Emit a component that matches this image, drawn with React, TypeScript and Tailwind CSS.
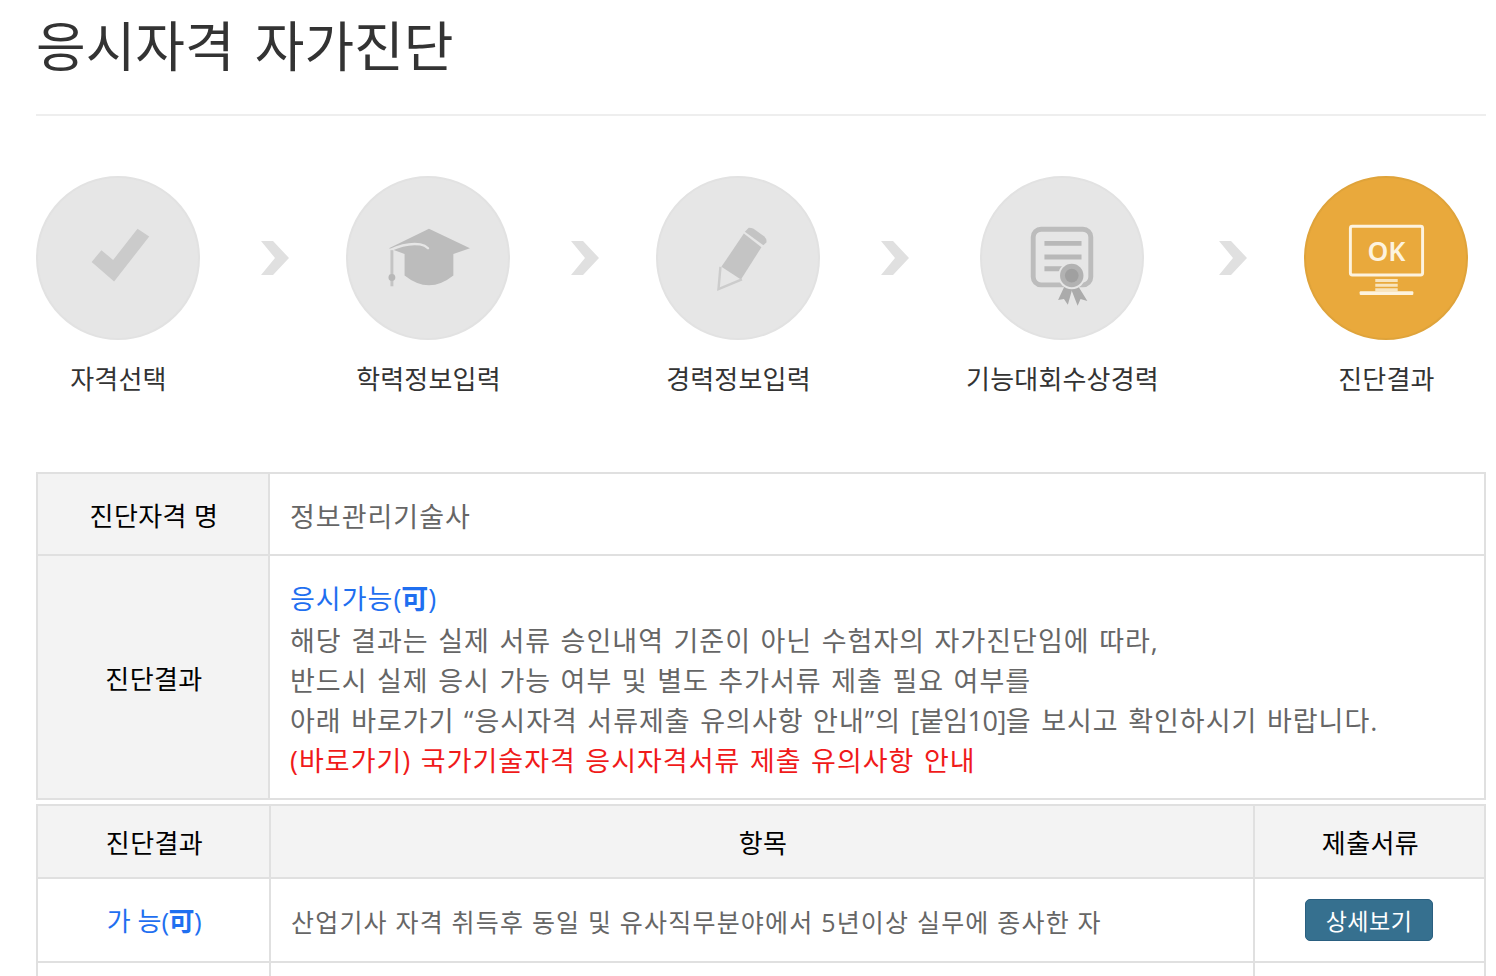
const font = "font-['Open_Sans','Noto_Sans_CJK_KR','Noto_Sans',sans-serif]";

function CheckIcon() {
  return (
    <svg viewBox="0 0 164 164" className="h-full w-full">
      <polygon points="102,52 114,60 78,106 55,86 65,74 77,84" fill="#cbcbcb" />
    </svg>
  );
}

function CapIcon() {
  return (
    <svg viewBox="0 0 164 164" className="h-full w-full">
      <path d="M83 52 L125 72 L108 78 V100 Q83 120 58 100 V78 L42 72 Z" fill="#bcbcbc" />
      <path d="M43 74 Q60 66 74 68 Q79 69 82 72" fill="none" stroke="#e6e6e6" strokeWidth="2.5" strokeLinecap="round" />
      <path d="M45 74 V111" stroke="#c4c4c4" strokeWidth="3" />
      <circle cx="45" cy="102" r="3.5" fill="#b8b8b8" />
    </svg>
  );
}

function PencilIcon() {
  return (
    <svg viewBox="0 0 164 164" className="h-full w-full">
      <polygon points="65,91 88,57 106,71 85,104" fill="#c4c4c4" />
      <path d="M89 55 L93 51 Q96 51 98 52 L109 60 Q112 63 111 66 L108 69 Z" fill="#c4c4c4" />
      <path d="M64 91 L62 114 L86 104" fill="none" stroke="#cccccc" strokeWidth="2.5" />
    </svg>
  );
}

function CertIcon() {
  return (
    <svg viewBox="0 0 164 164" className="h-full w-full">
      <rect x="52.5" y="52.5" width="59" height="57" rx="8" fill="none" stroke="#bcbcbc" strokeWidth="5" />
      <path d="M64 67 H102 M64 81 H102 M64 93 H82" stroke="#b8b8b8" strokeWidth="5" />
      <polygon points="85,110 78,125 84,124 88,130 93,112" fill="#ababab" />
      <polygon points="98,110 108,126 101,124 98,131 91,113" fill="#ababab" />
      <circle cx="92" cy="100" r="14" fill="#e6e6e6" />
      <circle cx="92" cy="100" r="12" fill="#b2b2b2" />
      <circle cx="92" cy="100" r="7" fill="#a0a0a0" />
    </svg>
  );
}

function OkIcon() {
  return (
    <svg viewBox="0 0 164 164" className="h-full w-full">
      <rect x="45.5" y="49.500" width="74" height="50" rx="2" fill="none" stroke="#fdf3df" strokeWidth="3" />
      <text x="63" y="85" textLength="39" lengthAdjust="spacingAndGlyphs" fontSize="28" fontWeight="600" fill="#fdf3df" fontFamily="'Noto Sans', sans-serif">OK</text>
      <path d="M71 105 H94 M71 110 H94 M71 114.500 H94" stroke="#f8e4bd" strokeWidth="3" />
      <rect x="55" y="116" width="55" height="4" rx="1" fill="#fdf3df" />
    </svg>
  );
}

function Arrow({ className }: { className: string }) {
  return (
    <svg viewBox="0 0 28 34" className={`h-[34px] w-[28px] shrink-0 ${className}`}>
      <polygon points="0,0 12,0 28,17 12,34 0,34 14,17" fill="#e0e0e0" />
    </svg>
  );
}

function Step({ label, active, children }: { label: string; active?: boolean; children: React.ReactNode }) {
  return (
    <div className="flex w-[164px] shrink-0 flex-col items-center">
      <div className={`h-[164px] w-[164px] rounded-full border-2 ${active ? "border-[#dfa33a] bg-[#e9a93c]" : "border-[#e2e2e2] bg-[#e6e6e6]"}`}>
        {children}
      </div>
      <div className="mt-[20px] whitespace-nowrap pl-[1px] text-[26px] leading-[38px] tracking-[0.2px] text-[#333]">{label}</div>
    </div>
  );
}

const th = "border-2 border-[#e0e0e0] bg-[#f3f3f3] pl-[2px] pt-[4px] text-[26px] font-normal tracking-[0.4px] text-black";
const cell = "border-2 border-[#e0e0e0]";

export default function App() {
  return (
    <div className={`${font} h-[976px] overflow-hidden bg-white pl-[36px] pr-[10px]`}>
      <h1 className="h-[116px] border-b-2 border-[#eeeeee] pt-[10px] text-[54px] leading-[72px] font-normal text-[#333] [word-spacing:6px]">응시자격 자가진단</h1>

      <div className="mt-[60px] flex items-start">
        <Step label="자격선택"><CheckIcon /></Step>
        <Arrow className="ml-[61px] mr-[57px] mt-[65px]" />
        <Step label="학력정보입력"><CapIcon /></Step>
        <Arrow className="ml-[61px] mr-[57px] mt-[65px]" />
        <Step label="경력정보입력"><PencilIcon /></Step>
        <Arrow className="ml-[61px] mr-[71px] mt-[65px]" />
        <Step label="기능대회수상경력"><CertIcon /></Step>
        <Arrow className="ml-[75px] mr-[57px] mt-[65px]" />
        <Step label="진단결과" active><OkIcon /></Step>
      </div>

      <table className="mt-[74px] w-[1450px] table-fixed border-collapse border-2 border-[#e0e0e0]">
        <tbody>
          <tr className="h-[82px]">
            <th className={`w-[232px] ${th}`}>진단자격 명</th>
            <td className={`${cell} pl-[20px] pt-[6px] text-[27px] tracking-[1px] text-[#666]`}>정보관리기술사</td>
          </tr>
          <tr className="h-[244px]">
            <th className={th}>진단결과</th>
            <td className={`${cell} pl-[20px] pt-[6px] text-[27px] leading-[40px] tracking-[1px] text-[#666] [word-spacing:1.5px]`}>
              <div className="mb-[2px] text-[#1f6ff0]">응시가능<span className="tracking-[0px]">(<b>可</b>)</span></div>
              <div>해당 결과는 실제 서류 승인내역 기준이 아닌 수험자의 자가진단임에 따라,</div>
              <div>반드시 실제 응시 가능 여부 및 별도 추가서류 제출 필요 여부를</div>
              <div>아래 바로가기 “응시자격 서류제출 유의사항 안내”의 <span className="tracking-[-0.5px]">[붙임10]</span>을 보시고 확인하시기 바랍니다.</div>
              <div className="text-[#f01a1a]">(바로가기) 국가기술자격 응시자격서류 제출 유의사항 안내</div>
            </td>
          </tr>
        </tbody>
      </table>

      <table className="mt-[4px] w-[1450px] table-fixed border-collapse border-2 border-[#e0e0e0]">
        <tbody>
          <tr className="h-[73px]">
            <th className={`w-[233px] ${th}`}>진단결과</th>
            <th className={th}>항목</th>
            <th className={`w-[231px] ${th}`}>제출서류</th>
          </tr>
          <tr className="h-[84px]">
            <td className={`${cell} pl-[1px] pt-[2px] text-center text-[26px] text-[#1f6ff0]`}>가 능<span className="tracking-[-0.5px]">(<b>可</b>)</span></td>
            <td className={`${cell} pl-[20px] pt-[6px] text-[25px] tracking-[1.2px] text-[#666]`}>산업기사 자격 취득후 동일 및 유사직무분야에서 5년이상 실무에 종사한 자</td>
            <td className={`${cell} pr-[2px] text-center`}>
              <button className="h-[42px] w-[128px] rounded-[5px] border border-[#2a5f80] bg-[#36708f] pl-[1px] pt-[2px] text-[23px] leading-[36px] tracking-[0.5px] text-white">상세보기</button>
            </td>
          </tr>
          <tr className="h-[84px]">
            <td className={cell} />
            <td className={cell} />
            <td className={cell} />
          </tr>
        </tbody>
      </table>
    </div>
  );
}
